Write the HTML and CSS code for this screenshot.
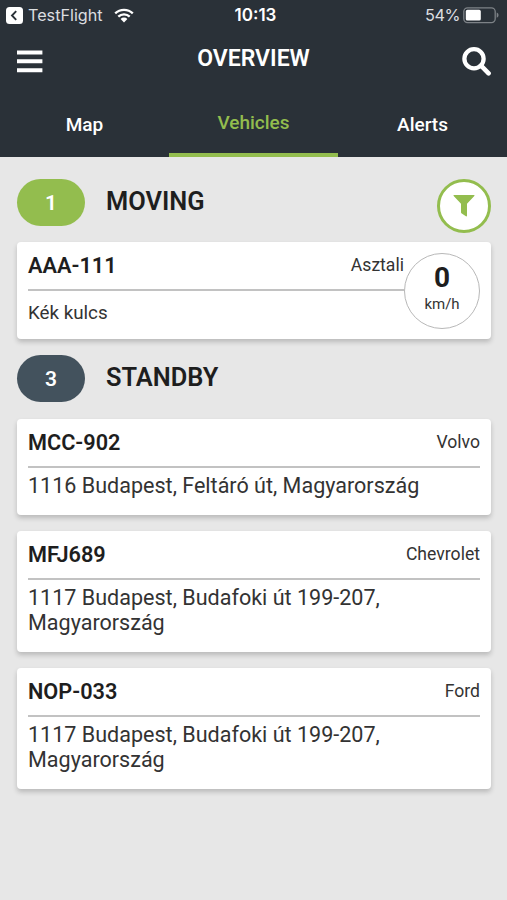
FILE: index.html
```html
<!DOCTYPE html>
<html lang="en">
<head>
    <meta charset="UTF-8">
    <meta name="viewport" content="width=device-width, initial-scale=1.0">
    <title>Overview</title>
    <link rel="stylesheet" href="styles.css">
</head>
<body>

<header class="header">
    <div class="status-bar">
        <div class="status-left">
            <svg class="back-icon" width="17" height="17" viewBox="0 0 17 17">
                <rect width="17" height="17" rx="3.5" fill="#fff"/>
                <path d="M10.2 4.2 6 8.5l4.2 4.3" fill="none" stroke="#2a3138" stroke-width="1.9"/>
            </svg>
            <span class="status-app">TestFlight</span>
            <svg class="wifi-icon" width="20" height="15" viewBox="0 0 20 15">
                <path d="M1.2 5.4a12.6 12.6 0 0 1 17.6 0M4.3 8.6a8.2 8.2 0 0 1 11.4 0" fill="none" stroke="#fff" stroke-width="2.3"/>
                <path d="M10 14.4 6.6 11a4.8 4.8 0 0 1 6.8 0z" fill="#fff"/>
            </svg>
        </div>
        <div class="status-time">10:13</div>
        <div class="status-right">
            <span class="status-battery">54%</span>
            <svg width="37" height="17" viewBox="0 0 37 17">
                <rect x=".8" y=".8" width="31.4" height="14.8" rx="3.8" fill="none" stroke="#7d8287" stroke-width="1.3"/>
                <rect x="2.8" y="2.8" width="15" height="10.8" rx="1.6" fill="#fff"/>
                <path d="M33.7 5.6c2.4.8 2.4 4.4 0 5.2z" fill="#7d8287"/>
            </svg>
        </div>
    </div>
    <div class="navbar">
        <button class="icon-button">
            <svg width="26" height="23" viewBox="0 0 26 23">
                <path d="M0 2.4h25.4M0 11.3h25.4M0 20.2h25.4" stroke="#fff" stroke-width="4"/>
            </svg>
        </button>
        <h1 class="title">OVERVIEW</h1>
        <button class="icon-button">
            <svg width="30" height="29" viewBox="0 0 30 29">
                <circle cx="12" cy="11.8" r="9.6" fill="none" stroke="#fff" stroke-width="4.3"/>
                <path d="m19 18.7 7.6 7.6" stroke="#fff" stroke-width="4.6" stroke-linecap="round"/>
            </svg>
        </button>
    </div>
    <nav class="tabs">
        <a class="tab">Map</a>
        <a class="tab active">Vehicles</a>
        <a class="tab">Alerts</a>
    </nav>
</header>

<main class="content">
    <div class="section-header">
        <span class="count moving">1</span>
        <h2>MOVING</h2>
        <button class="filter-button">
            <svg width="22" height="22" viewBox="0 0 22 22">
                <path d="M1 0h20q1 .2.3 1.1L14 8.7v12q-.2 1.1-1.1.6L8.4 18.2q-.4-.3-.4-1V8.7L.7 1.1Q0 .2 1 0z" fill="#93bd4e"/>
            </svg>
        </button>
    </div>
    <div class="card moving-card">
        <div class="card-info">
            <div class="card-top">
                <span class="plate">AAA-111</span>
                <span class="brand">Asztali</span>
            </div>
            <div class="note">Kék kulcs</div>
        </div>
        <div class="speed">
            <span class="speed-value">0</span>
            <span class="speed-unit">km/h</span>
        </div>
    </div>

    <div class="section-header">
        <span class="count standby">3</span>
        <h2>STANDBY</h2>
    </div>
    <div class="card">
        <div class="card-top">
            <span class="plate">MCC-902</span>
            <span class="brand">Volvo</span>
        </div>
        <div class="address">1116 Budapest, Feltáró út, Magyarország</div>
    </div>
    <div class="card">
        <div class="card-top">
            <span class="plate">MFJ689</span>
            <span class="brand">Chevrolet</span>
        </div>
        <div class="address">1117 Budapest, Budafoki út 199-207, Magyarország</div>
    </div>
    <div class="card">
        <div class="card-top">
            <span class="plate">NOP-033</span>
            <span class="brand">Ford</span>
        </div>
        <div class="address">1117 Budapest, Budafoki út 199-207, Magyarország</div>
    </div>
</main>

</body>
</html>
```
FILE: styles.css
```css
* {
    box-sizing: border-box;
}
body {
    margin: 0;
    min-height: 100vh;
    font-family: Roboto, sans-serif;
    background-color: #e7e7e7;
    color: #1e1e1e;
}
button {
    padding: 0;
    border: none;
    background: none;
}
svg {
    display: block;
}
.header {
    height: 157px;
    background-color: #2a3138;
    color: white;
}
.status-bar {
    display: grid;
    grid-template-columns: 1fr auto 1fr;
    align-items: center;
    height: 30px;
    padding: 0 7px 0 6px;
    font-family: Inter, sans-serif;
    font-size: 16.3px;
}
.status-left {
    display: flex;
    align-items: center;
}
.status-app {
    margin: 0 11px 0 5px;
    font-size: 16.2px;
    color: #dcdee0;
}
.status-time {
    padding-left: 5px;
    font-size: 17px;
    font-weight: 600;
}
.status-right {
    display: flex;
    align-items: center;
    justify-content: flex-end;
    gap: 3px;
    color: #dcdee0;
}
.status-battery {
    letter-spacing: -0.5px;
}
.navbar {
    display: flex;
    align-items: center;
    justify-content: space-between;
    height: 62px;
    padding: 0 15px 0 17px;
}
.title {
    margin: 0 0 6px 2px;
    font-size: 23px;
    font-weight: 600;
}
.tabs {
    display: flex;
    height: 65px;
}
.tab {
    flex: 1;
    display: flex;
    align-items: center;
    justify-content: center;
    font-size: 19px;
    font-weight: 500;
}
.tab.active {
    color: #93bd4e;
    border-bottom: 4px solid #93bd4e;
}
.content {
    padding: 22px 16px 0 17px;
}
.section-header {
    display: flex;
    align-items: flex-start;
    height: 47px;
    margin-bottom: 16px;
}
.card + .section-header {
    margin-bottom: 17px;
}
.count {
    width: 68px;
    height: 47px;
    border-radius: 24px;
    line-height: 48px;
    text-align: center;
    color: white;
    font-size: 21px;
    font-weight: 600;
}
.count.moving {
    background-color: #93bd4e;
}
.count.standby {
    background-color: #43525d;
}
h2 {
    margin: 0 0 0 21px;
    line-height: 45px;
    font-size: 25.4px;
    font-weight: 600;
}
.filter-button {
    display: flex;
    align-items: center;
    justify-content: center;
    width: 54px;
    height: 54px;
    margin-left: auto;
    border: 3px solid #93bd4e;
    border-radius: 50%;
    background-color: white;
}
.card {
    margin-bottom: 16px;
    padding: 0 11px 16px;
    background-color: white;
    border-radius: 4px;
    box-shadow: 0 3px 5px rgba(0, 0, 0, 0.2);
}
.card-top {
    display: flex;
    justify-content: space-between;
    height: 49px;
    border-bottom: 2px solid #c2c2c2;
}
.plate {
    line-height: 48px;
    font-size: 21.7px;
    font-weight: 600;
}
.brand {
    line-height: 46px;
    font-size: 17.6px;
    color: #333;
}
.address {
    padding-top: 5px;
    line-height: 25.6px;
    font-size: 21.55px;
    color: #333;
}
.moving-card {
    display: flex;
    height: 97px;
}
.card-info {
    flex: 1;
}
.note {
    line-height: 45px;
    font-size: 18.8px;
    color: #333;
}
.speed {
    display: flex;
    flex-direction: column;
    align-items: center;
    width: 76px;
    height: 76px;
    margin-top: 11px;
    padding-top: 9px;
    border: 1.5px solid #b8b8b8;
    border-radius: 50%;
}
.speed-value {
    line-height: 29px;
    font-size: 28px;
    font-weight: 700;
}
.speed-unit {
    line-height: 24px;
    font-size: 15px;
    color: #333;
}
```
